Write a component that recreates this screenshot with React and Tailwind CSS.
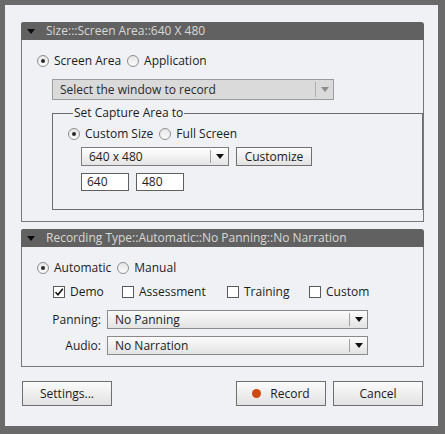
import React from 'react';

const font = { fontFamily: '"Open Sans", "Liberation Sans", sans-serif' };

function Radio({ checked, label }) {
  return (
    <label className="flex items-center gap-[5px] h-[16px]">
      <span className="w-[12px] h-[12px] rounded-full border border-[#8f8f8f] bg-gradient-to-b from-[#e6e6e6] to-[#fbfbfb] flex items-center justify-center">
        {checked && <span className="w-[4px] h-[4px] rounded-full bg-[#2b2b2b]" />}
      </span>
      <span>{label}</span>
    </label>
  );
}

function Check({ checked, label }) {
  return (
    <label className="flex items-center gap-[5px] h-[16px]">
      <span className="w-[12px] h-[12px] border border-[#5a5a5a] bg-white flex items-center justify-center">
        {checked && (
          <svg width="10" height="10" viewBox="0 0 10 10">
            <path d="M1.5 5.2 L4 7.8 L8.8 1.8" fill="none" stroke="#111" strokeWidth="1.6" />
          </svg>
        )}
      </span>
      <span>{label}</span>
    </label>
  );
}

function Arrow({ color = '#111' }) {
  return (
    <svg width="8" height="5" viewBox="0 0 8 5">
      <path d="M0 0 H8 L4 5 Z" fill={color} />
    </svg>
  );
}

function Dropdown({ value, width, height = 19, disabled, light }) {
  return (
    <div
      className={`flex border ${
        disabled
          ? 'border-[#9c9c9c] bg-[#dadada] text-[#2a2a2a]'
          : light
          ? 'border-[#7c7c7c] bg-gradient-to-b from-[#ffffff] to-[#e4e4e4]'
          : 'border-[#8a8a8a] bg-gradient-to-b from-[#fbfbfb] to-[#e3e3e3]'
      }`}
      style={{ width, height }}
    >
      <div className="flex-1 flex items-center pl-[7px] leading-none">{value}</div>
      <div
        className={`w-[18px] flex items-center justify-center my-[2px] border-l ${
          disabled ? 'border-[#b0b0b0]' : 'border-[#a0a0a0]'
        }`}
      >
        <Arrow color={disabled ? '#8c8c8c' : '#111'} />
      </div>
    </div>
  );
}

function Button({ children, width = 90, height = 25 }) {
  return (
    <button
      className="flex items-center justify-center gap-[9px] border border-[#6f6f6f] bg-gradient-to-b from-[#fbfbfb] to-[#e2e2e2] text-[#1a1a1a]"
      style={{ width, height }}
    >
      {children}
    </button>
  );
}

function PanelHeader({ title }) {
  return (
    <div className="h-[18px] bg-[#616161] rounded-tr-[3px] rounded-tl-[2px] flex items-center pl-[6px] text-[#d8d8d8]">
      <Arrow color="#0b0b0b" />
      <span className="ml-[11px] leading-none">{title}</span>
    </div>
  );
}

export default function App() {
  return (
    <div
      className="w-[445px] h-[434px] bg-[#6a6a6a] pt-[5px] pl-[5px] pr-[7px] pb-[8px] text-[12px] text-[#1c1c1c]"
      style={font}
    >
      <div className="h-full bg-[#f0f1f5] pt-[17px] pl-[16px] pr-[14px] flex flex-col">
        {/* Size panel */}
        <div className="w-[403px]">
          <PanelHeader title="Size:::Screen Area::640 X 480" />
          <div className="border border-t-0 border-[#777] h-[182px] pl-[15px] pt-[13px]">
            <div className="flex gap-[6px]">
              <Radio checked label="Screen Area" />
              <Radio label="Application" />
            </div>
            <div className="ml-[15px] mt-[10px]">
              <Dropdown value="Select the window to record" width={282} height={21} disabled />
            </div>
            <fieldset className="ml-[15px] mt-[5px] w-[371px] border border-[#6c6c6c] pl-[15px] pb-[18px]">
              <legend className="ml-[5px] px-[1px] h-[16px] leading-[16px]">Set Capture Area to</legend>
              <div className="flex gap-[6px] mt-[5px]">
                <Radio checked label="Custom Size" />
                <Radio label="Full Screen" />
              </div>
              <div className="flex gap-[7px] mt-[5px] ml-[13px]">
                <Dropdown value="640 x 480" width={148} light />
                <Button width={76} height={19}>Customize</Button>
              </div>
              <div className="flex gap-[7px] mt-[7px] ml-[13px]">
                <div className="w-[48px] h-[18px] border border-[#5f5f5f] bg-white flex items-center pl-[5px] leading-none">640</div>
                <div className="w-[48px] h-[18px] border border-[#5f5f5f] bg-white flex items-center pl-[5px] leading-none">480</div>
              </div>
            </fieldset>
          </div>
        </div>

        {/* Recording type panel */}
        <div className="w-[403px] mt-[7px]">
          <PanelHeader title="Recording Type::Automatic::No Panning::No Narration" />
          <div className="border border-t-0 border-[#777] h-[120px] pl-[15px] pt-[13px]">
            <div className="flex gap-[6px]">
              <Radio checked label="Automatic" />
              <Radio label="Manual" />
            </div>
            <div className="flex mt-[8px] ml-[16px]">
              <div className="w-[69px]"><Check checked label="Demo" /></div>
              <div className="w-[105px]"><Check label="Assessment" /></div>
              <div className="w-[82px]"><Check label="Training" /></div>
              <Check label="Custom" />
            </div>
            <div className="flex items-center mt-[10px]">
              <span className="w-[64px] text-right">Panning:</span>
              <div className="ml-[6px]">
                <Dropdown value="No Panning" width={261} />
              </div>
            </div>
            <div className="flex items-center mt-[7px]">
              <span className="w-[64px] text-right">Audio:</span>
              <div className="ml-[6px]">
                <Dropdown value="No Narration" width={261} />
              </div>
            </div>
          </div>
        </div>

        {/* Buttons */}
        <div className="flex mt-[14px] pl-[1px]">
          <Button>Settings...</Button>
          <div className="flex gap-[7px] ml-auto mr-[1px]">
            <Button>
              <span className="w-[9px] h-[9px] rounded-full bg-[#cf4a12]" />
              <span>Record</span>
            </Button>
            <Button>Cancel</Button>
          </div>
        </div>
      </div>
    </div>
  );
}
